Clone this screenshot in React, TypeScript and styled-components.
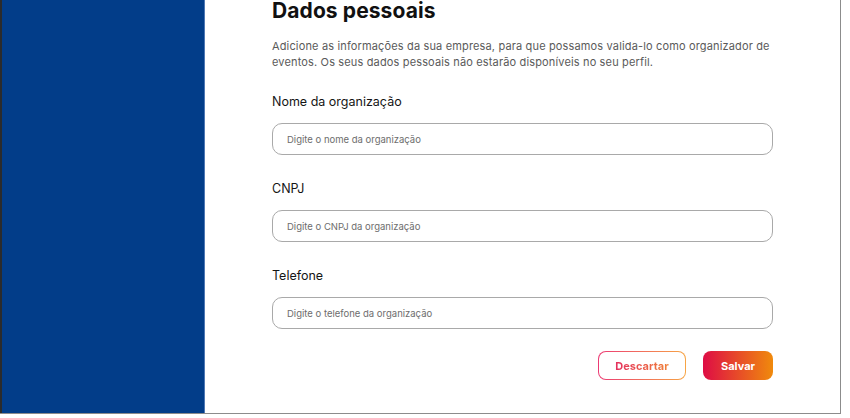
import React from "react";
import styled, { createGlobalStyle } from "styled-components";

const Global = createGlobalStyle`
  html, body { margin: 0; padding: 0; background: #ffffff; }
  body { font-family: "Inter", "Liberation Sans", sans-serif; overflow: hidden; }
  * { box-sizing: border-box; }
`;

const Frame = styled.div`
  display: flex;
  width: 841px;
  height: 414px;
  border-right: 1px solid #8c8c8c;
  border-bottom: 1px solid #8c8c8c;
  overflow: hidden;
`;

const Sidebar = styled.aside`
  width: 205px;
  flex: none;
  background: #023d89;
  border-left: 2px solid #2b2b2b;
  border-right: 1px solid #4f78b4;
`;

const Main = styled.main`
  flex: 1;
  padding: 0 67px;
  display: flex;
  flex-direction: column;
`;

const Title = styled.h1`
  margin: 0;
  font-size: 21px;
  line-height: 21px;
  font-weight: 700;
  color: #111111;
  letter-spacing: 0.1px;
`;

const Description = styled.p`
  margin: 17px 0 0;
  font-size: 11px;
  line-height: 16px;
  color: #5a5a5a;
  letter-spacing: 0.15px;
`;

const Form = styled.form`
  display: flex;
  flex-direction: column;
  gap: 26px;
  margin-top: 24px;
`;

const Field = styled.label`
  display: flex;
  flex-direction: column;
  gap: 13px;
`;

const LabelText = styled.span`
  font-size: 12.5px;
  line-height: 16px;
  color: #151515;
`;

const Input = styled.input`
  height: 32px;
  width: 100%;
  border: 1px solid #a9a9a9;
  border-radius: 10px;
  padding: 0 14px;
  font-family: inherit;
  font-size: 9.5px;
  color: #333;
  background: #fff;
  outline: none;
  &::placeholder { color: #6d6d6d; }
`;

const Actions = styled.div`
  display: flex;
  justify-content: flex-end;
  gap: 17px;
  margin-top: 22px;
`;

const GhostButton = styled.button`
  height: 29px;
  width: 88px;
  border-radius: 8px;
  border: 1.5px solid transparent;
  background:
    linear-gradient(#fff, #fff) padding-box,
    linear-gradient(90deg, #ec3a74, #f7a544) border-box;
  font-family: inherit;
  font-size: 11px;
  font-weight: 700;
  cursor: pointer;
  padding: 0;
`;

const GradientText = styled.span`
  background: linear-gradient(90deg, #e4305f, #f0823a);
  -webkit-background-clip: text;
  background-clip: text;
  color: transparent;
`;

const PrimaryButton = styled.button`
  height: 29px;
  width: 70px;
  border-radius: 8px;
  border: none;
  background: linear-gradient(90deg, #de0d45, #f08a0c);
  color: #fff;
  font-family: inherit;
  font-size: 11px;
  font-weight: 700;
  cursor: pointer;
  padding: 0;
`;

const fields = [
  { label: "Nome da organização", placeholder: "Digite o nome da organização" },
  { label: "CNPJ", placeholder: "Digite o CNPJ da organização" },
  { label: "Telefone", placeholder: "Digite o telefone da organização" },
];

export default function App() {
  return (
    <>
      <Global />
      <Frame>
        <Sidebar />
        <Main>
          <Title>Dados pessoais</Title>
          <Description>
            Adicione as informações da sua empresa, para que possamos valida-lo como organizador de
            eventos. Os seus dados pessoais não estarão disponíveis no seu perfil.
          </Description>
          <Form onSubmit={(e) => e.preventDefault()}>
            {fields.map((f) => (
              <Field key={f.label}>
                <LabelText>{f.label}</LabelText>
                <Input placeholder={f.placeholder} />
              </Field>
            ))}
          </Form>
          <Actions>
            <GhostButton type="button">
              <GradientText>Descartar</GradientText>
            </GhostButton>
            <PrimaryButton type="button">Salvar</PrimaryButton>
          </Actions>
        </Main>
      </Frame>
    </>
  );
}
